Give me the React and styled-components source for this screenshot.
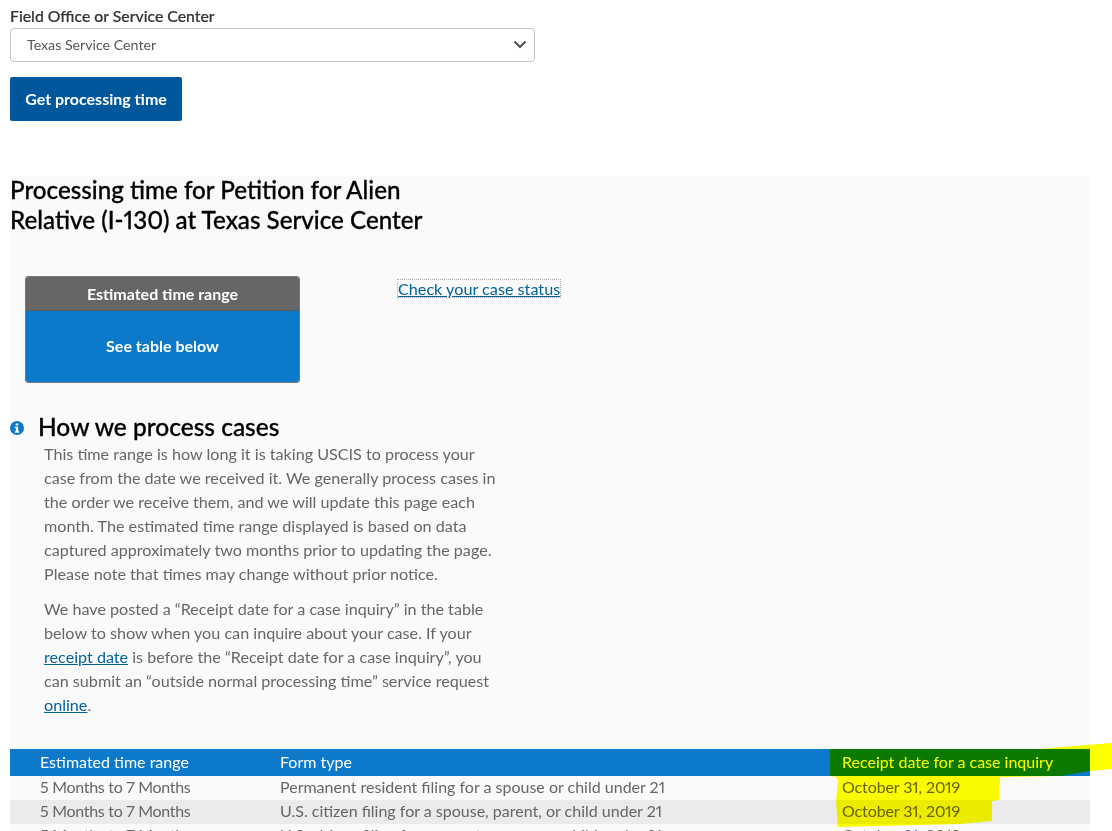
import React from "react";
import styled, { createGlobalStyle } from "styled-components";

const GlobalStyle = createGlobalStyle`
  html, body {
    margin: 0;
    padding: 0;
    background: #fff;
    height: 831px;
    overflow: hidden;
  }
  body {
    font-family: Lato, "Open Sans", "Liberation Sans", sans-serif;
    font-variant-numeric: proportional-nums;
  }
`;

const Page = styled.div`
  position: relative;
  width: 1112px;
  height: 831px;
  overflow: hidden;
  padding: 7px 22px 0 10px;
  box-sizing: border-box;
`;

const FieldLabel = styled.div`
  font-size: 15.8px;
  line-height: 18px;
  font-weight: 500;
  color: #333;
  margin-bottom: 3px;
  -webkit-text-stroke: 0.2px #333;
`;

const SelectBox = styled.div`
  width: 525px;
  height: 34px;
  box-sizing: border-box;
  border: 1px solid #c4c4c4;
  border-radius: 4px;
  padding: 0 7px 2px 16px;
  display: flex;
  align-items: center;
  justify-content: space-between;
  font-size: 14.2px;
  color: #555;
`;

const SubmitButton = styled.button`
  display: block;
  width: 172px;
  height: 44px;
  margin: 15px 0 55px;
  padding: 0 0 2px;
  border: 0;
  border-radius: 2px;
  background: #00579c;
  color: #fff;
  font-family: inherit;
  font-size: 16px;
  font-weight: 700;
`;

const Panel = styled.section`
  display: flow-root;
  background: #fafafa;
  width: 1080px;
  height: 660px;
`;

const Title = styled.h2`
  margin: -1px 0 0;
  width: 440px;
  font-size: 24.2px;
  line-height: 30px;
  font-weight: 500;
  color: #000;
  -webkit-text-stroke: 0.3px #000;
`;

const StatusRow = styled.div`
  display: flex;
  align-items: flex-start;
  margin: 41px 0 0 15px;
`;

const RangeCard = styled.div`
  width: 275px;
  height: 107px;
  box-sizing: border-box;
  border: 1px solid #777;
  border-radius: 3px;
  overflow: hidden;
  color: #fff;
  font-weight: 700;
  font-size: 16px;
  text-align: center;
`;

const RangeHead = styled.div`
  height: 33px;
  line-height: 34px;
  background: #666;
  border-bottom: 1px solid #5a5a5a;
`;

const RangeBody = styled.div`
  height: 71px;
  line-height: 70px;
  background: #0c79ca;
`;

const StatusLink = styled.a`
  margin: 4px 0 0 98px;
  font-size: 16.2px;
  line-height: 17px;
  color: #00629b;
  text-decoration: underline;
  outline: 1px dotted #aaa;
`;

const InfoHeading = styled.div`
  display: flex;
  align-items: center;
  gap: 14px;
  margin-top: 27px;
  height: 32px;
  font-size: 24.5px;
  font-weight: 500;
  color: #000;
  -webkit-text-stroke: 0.3px #000;
  svg {
    margin-top: 4px;
  }
`;

const InfoText = styled.div`
  width: 458px;
  margin: 0 0 0 34px;
`;

const Para = styled.p`
  margin: 0 0 11px;
  font-size: 16.15px;
  line-height: 24px;
  color: #666;
  a {
    color: #00629b;
    text-decoration: underline;
  }
`;

const Table = styled.div`
  margin-top: 32px;
`;

const Row = styled.div`
  display: grid;
  grid-template-columns: 240px 562px 1fr;
  padding-left: 30px;
  height: ${(p) => (p.$head ? "27px" : "24px")};
  line-height: ${(p) => (p.$head ? "25px" : "22px")};
  font-size: 16px;
  white-space: nowrap;
  color: ${(p) => (p.$head ? "#fff" : "#666")};
  background: ${(p) => (p.$head ? "#0c79ca" : p.$shade ? "#ebebeb" : "#fafafa")};
`;

const RangeCell = styled.span`
  letter-spacing: -0.3px;
`;

const DateCell = styled.span`
  letter-spacing: -0.12px;
`;

// marker pen scribbles, multiplied over the table like in the screenshot
const Highlight = styled.svg`
  position: absolute;
  left: 0;
  top: 0;
  mix-blend-mode: multiply;
  pointer-events: none;
`;

const InfoIcon = () => (
  <svg width="14" height="14" viewBox="0 0 14 14">
    <path
      fill="#0c79ca"
      fillRule="evenodd"
      d="M7 0a7 7 0 1 1 0 14A7 7 0 0 1 7 0ZM5.7 2.4v2.2h2.6V2.4ZM4.8 5.7v1.4h1v3.2h-1v1.4h4.4v-1.4h-1V5.7Z"
    />
  </svg>
);

const rows = [
  ["5 Months to 7 Months", "Permanent resident filing for a spouse or child under 21", "October 31, 2019"],
  ["5 Months to 7 Months", "U.S. citizen filing for a spouse, parent, or child under 21", "October 31, 2019"],
  ["5 Months to 7 Months", "U.S. citizen filing for a parent, spouse, or child under 21", "October 31, 2019"],
];

const App = () => (
  <Page>
    <GlobalStyle />
    <FieldLabel>Field Office or Service Center</FieldLabel>
    <SelectBox>
      Texas Service Center
      <svg width="14" height="9" viewBox="0 0 14 9" fill="none" stroke="#555" strokeWidth="2.2">
        <path d="M1.5 1.5 7 7l5.5-5.5" />
      </svg>
    </SelectBox>
    <SubmitButton>Get processing time</SubmitButton>

    <Panel>
      <Title>Processing time for Petition for Alien Relative (I-130) at Texas Service Center</Title>
      <StatusRow>
        <RangeCard>
          <RangeHead>Estimated time range</RangeHead>
          <RangeBody>See table below</RangeBody>
        </RangeCard>
        <StatusLink>Check your case status</StatusLink>
      </StatusRow>

      <InfoHeading>
        <InfoIcon />
        How we process cases
      </InfoHeading>
      <InfoText>
        <Para>
          This time range is how long it is taking USCIS to process your case from the date we received it. We
          generally process cases in the order we receive them, and we will update this page each month. The
          estimated time range displayed is based on data captured approximately two months prior to updating
          the page. Please note that times may change without prior notice.
        </Para>
        <Para>
          We have posted a “Receipt date for a case inquiry” in the table below to show when you can inquire
          about your case. If your <a>receipt date</a> is before the “Receipt date for a case inquiry”, you can
          submit an “outside normal processing time” service request <a>online</a>.
        </Para>
      </InfoText>

      <Table>
        <Row $head>
          <span>Estimated time range</span>
          <span>Form type</span>
          <span>Receipt date for a case inquiry</span>
        </Row>
        {rows.map((r, i) => (
          <Row key={i} $shade={i % 2 === 1}>
            <RangeCell>{r[0]}</RangeCell>
            <span>{r[1]}</span>
            <DateCell>{r[2]}</DateCell>
          </Row>
        ))}
      </Table>
    </Panel>

    <Highlight width="1112" height="831" viewBox="0 0 1112 831">
      <path
        fill="#ffff00"
        d="M830 749 L1040 749 L1086 745 L1112 743 L1112 769 L1090 771 L1060 776 L1000 777 L999 800 L992 801 L992 821 L960 824 L838 827 L836 801 L838 780 L836 777 L830 776 Z"
      />
    </Highlight>
  </Page>
);

export default App;
